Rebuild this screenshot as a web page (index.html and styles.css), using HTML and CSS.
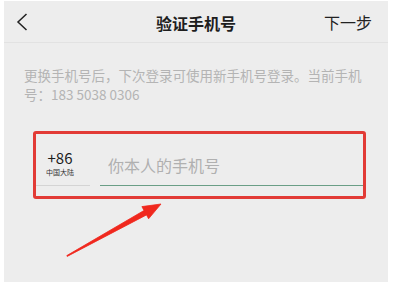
FILE: index.html
```html
<!DOCTYPE html>
<html lang="zh-CN">
<head>
<meta charset="utf-8">
<link rel="stylesheet" href="styles.css">
</head>
<body>
<div class="panel">
  <header class="header">
    <svg class="back" width="12" height="18" viewBox="0 0 12 18"><path d="M10.5 1 L2 9 L10.5 17" fill="none" stroke="#222" stroke-width="1.5"/></svg>
    <div class="title">验证手机号</div>
    <div class="next">下一步</div>
  </header>
  <p class="desc">更换手机号后，下次登录可使用新手机号登录。当前手机号：183 5038 0306</p>
  <div class="box">
    <div class="code">
      <div class="code-inner">
        <div class="cc">+86</div>
        <div class="region">中国大陆</div>
      </div>
    </div>
    <div class="phone">你本人的手机号</div>
  </div>
  <svg class="arrow" width="397" height="290" viewBox="0 0 397 290">
    <polygon points="66.8,255.6 144.0,210.5 141.9,206.6 161,204 148.6,218.8 146.5,214.9 67.2,256.4" fill="#f0281e" stroke="#f0281e" stroke-width="0.8" stroke-linejoin="round"/>
  </svg>
</div>
</body>
</html>
```
FILE: styles.css
```css
html, body {
  margin: 0;
  padding: 0;
  background: #ffffff;
}
body {
  width: 397px;
  height: 290px;
  overflow: hidden;
  font-family: "Noto Sans CJK SC", "Noto Sans", sans-serif;
}
.panel {
  position: relative;
  margin: 1px 0 0 4px;
  width: 384px;
  height: 281px;
  background: #ededed;
}
.header {
  height: 42px;
  border-bottom: 1px solid #e2e2e2;
  display: flex;
  align-items: center;
  justify-content: space-between;
  padding: 0 16px 0 12px;
  box-sizing: border-box;
  position: relative;
}
.back {
  display: block;
}
.title {
  position: absolute;
  left: 0;
  right: 0;
  text-align: center;
  font-size: 16px;
  font-weight: bold;
  color: #1e1e1e;
  line-height: 20px;
  top: 12px;
  pointer-events: none;
}
.next {
  font-size: 16px;
  color: #222;
  line-height: 20px;
}
.desc {
  margin: 0;
  padding: 23px 14px 0 20px;
  font-size: 13.5px;
  line-height: 19px;
  color: #b4b4b4;
}
.box {
  margin: 27px 0 0 29px;
  width: 333px;
  height: 68px;
  box-sizing: border-box;
  border: 3px solid #e23b36;
  border-radius: 3px;
  display: flex;
  gap: 10px;
}
.code {
  width: 54px;
  height: 52px;
  box-sizing: border-box;
  border-bottom: 1px solid #d4d4d4;
  padding-top: 15px;
}
.code-inner {
  width: 32px;
  margin-left: 8px;
  text-align: center;
}
.cc {
  font-size: 15px;
  line-height: 18px;
  color: #1e1e1e;
}
.region {
  font-size: 7px;
  line-height: 10px;
  color: #333;
}
.phone {
  flex: 1;
  height: 52px;
  box-sizing: border-box;
  border-bottom: 1px solid #6a9e86;
  padding: 21px 0 0 8px;
  font-size: 16px;
  line-height: 20px;
  color: #b0b0b0;
}
.arrow {
  position: absolute;
  left: -4px;
  top: -1px;
  pointer-events: none;
}
```
